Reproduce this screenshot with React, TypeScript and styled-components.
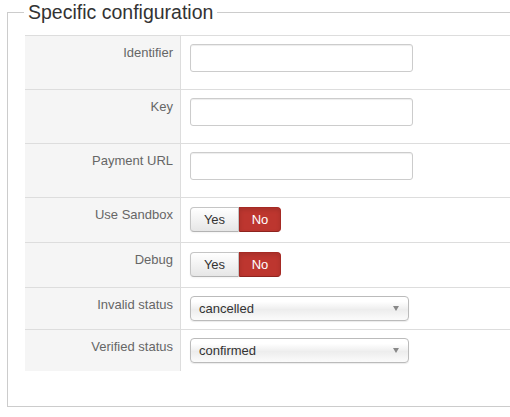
import React from 'react';
import styled, {createGlobalStyle} from "styled-components";

const GlobalStyle = createGlobalStyle`
  html, body {
    margin: 0;
    padding: 0;
    background: #fff;
    overflow: hidden;
  }
  body {
    font-family: "Liberation Sans", Arial, sans-serif;
    font-size: 13px;
    color: #333;
  }
`

type Field =
    | { kind: 'text', label: string }
    | { kind: 'toggle', label: string, value: boolean }
    | { kind: 'select', label: string, value: string }

const fields: Field[] = [
    {kind: 'text', label: 'Identifier'},
    {kind: 'text', label: 'Key'},
    {kind: 'text', label: 'Payment URL'},
    {kind: 'toggle', label: 'Use Sandbox', value: false},
    {kind: 'toggle', label: 'Debug', value: false},
    {kind: 'select', label: 'Invalid status', value: 'cancelled'},
    {kind: 'select', label: 'Verified status', value: 'confirmed'},
]

const rowHeight = {text: 53, toggle: 44, select: 41}
const valueTop = {text: 8, toggle: 9, select: 8}

export default function App() {
    return (
        <>
            <GlobalStyle/>
            <Fieldset>
                <Legend>Specific configuration</Legend>
                <Table>
                    {fields.map(f => (
                        <Row key={f.label} $h={rowHeight[f.kind]}>
                            <Label>{f.label}</Label>
                            <Value $top={valueTop[f.kind]}>
                                {f.kind === 'text' && <TextInput type="text"/>}
                                {f.kind === 'toggle' && (
                                    <Toggle>
                                        <ToggleButton $active={f.value} $side="left">Yes</ToggleButton>
                                        <ToggleButton $active={!f.value} $side="right">No</ToggleButton>
                                    </Toggle>
                                )}
                                {f.kind === 'select' && (
                                    <Select>
                                        <span>{f.value}</span>
                                        <Caret/>
                                    </Select>
                                )}
                            </Value>
                        </Row>
                    ))}
                </Table>
            </Fieldset>
        </>
    );
}

const Fieldset = styled.fieldset`
  margin: 0 0 0 7px;
  padding: 0 0 35px 17px;
  border: 1px solid #ccc;
  width: 505px;
  box-sizing: border-box;
`
const Legend = styled.legend`
  margin-left: -1px;
  padding: 0 4px;
  font-size: 19.5px;
  line-height: 24px;
  color: #333;
`
const Table = styled.div`
  margin-top: 11px;
  display: flex;
  flex-direction: column;
`
const Row = styled.div<{ $h: number }>`
  display: grid;
  grid-template-columns: 156px 1fr;
  height: ${p => p.$h}px;
  border-top: 1px solid #ddd;
`
const Label = styled.div`
  background: #f5f5f5;
  border-right: 1px solid #ddd;
  text-align: right;
  padding: 8px 7px 0 0;
  line-height: 18px;
  color: #666;
`
const Value = styled.div<{ $top: number }>`
  padding: ${p => p.$top}px 0 0 9px;
`
const TextInput = styled.input`
  display: block;
  width: 223px;
  height: 28px;
  box-sizing: border-box;
  border: 1px solid #ccc;
  border-radius: 3px;
  box-shadow: inset 0 1px 1px rgba(0, 0, 0, 0.075);
  background: #fff;
  margin: 0;
`
const Toggle = styled.div`
  display: flex;
  height: 25px;
`
const ToggleButton = styled.div<{ $active: boolean, $side: 'left' | 'right' }>`
  display: flex;
  align-items: center;
  justify-content: center;
  box-sizing: border-box;
  height: 25px;
  padding: 0 12px;
  width: ${p => p.$side === 'left' ? 49 : 42}px;
  border: 1px solid ${p => p.$active ? '#a52a24' : '#c5c5c5'};
  border-bottom-color: ${p => p.$active ? '#8e231e' : '#b3b3b3'};
  border-radius: ${p => p.$side === 'left' ? '4px 0 0 4px' : '0 4px 4px 0'};
  background: ${p => p.$active ? '#bd362f' : 'linear-gradient(#ffffff, #e6e6e6)'};
  color: ${p => p.$active ? '#fff' : '#333'};
  box-shadow: ${p => p.$active ? 'inset 0 2px 4px rgba(0,0,0,0.12)' : 'inset 0 1px 0 rgba(255,255,255,.2), 0 1px 2px rgba(0,0,0,.05)'};
  font-size: 13px;
`
const Select = styled.div`
  display: flex;
  align-items: center;
  justify-content: space-between;
  box-sizing: border-box;
  width: 219px;
  height: 25px;
  padding: 0 9px 0 8px;
  border: 1px solid #bbb;
  border-radius: 4px;
  background: linear-gradient(#ffffff 20%, #f0f0f0 50%, #ececec 52%, #fbfbfb);
  box-shadow: 0 1px 1px rgba(0, 0, 0, 0.08);
  color: #333;
  font-size: 13px;
`
const Caret = styled.span`
  width: 0;
  height: 0;
  border-left: 3px solid transparent;
  border-right: 3px solid transparent;
  border-top: 5px solid #888;
`
